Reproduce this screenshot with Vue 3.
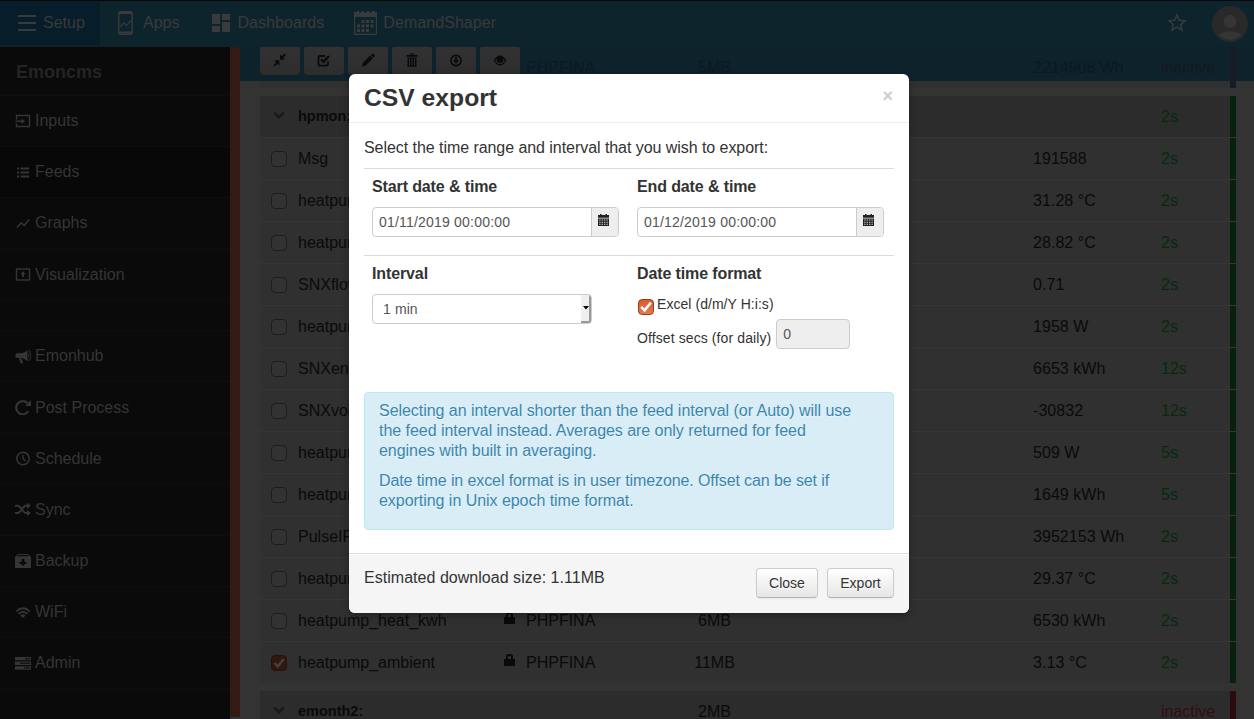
<script setup>
const icons = {
  inputs: '<path d="M1.500 5.500V1.500H14.500V12.500H1.500V9.300" fill="none" stroke="currentColor" stroke-width="1.400"/><path d="M.5 6.500h6V4.400L10 7.300 6.500 10.200V8.100H.5z"/>',
  feeds: '<path d="M2 2.500h2v2H2zM5.500 2.500H14v2H5.500zM2 6.500h2v2H2zM5.500 6.500H14v2H5.500zM2 10.500h2v2H2zM5.500 10.500H14v2H5.500z"/>',
  graphs: '<path d="M2 11.600 6.300 6.800 9.100 9.600 14.300 3.400" fill="none" stroke="currentColor" stroke-width="1.500"/>',
  visualization: '<rect x="1.500" y="2" width="13" height="11" fill="none" stroke="currentColor" stroke-width="1.400"/><path d="M8 4.300 10.700 7.300H9V10H7V7.300H5.300z"/>',
  emonhub: '<path d="M1.800 4.200H6C8.300 4.200 10.600 2.800 12 1.200V12c-1.400-1.500-3.700-3-6-3H1.800C-.2 8.200-.2 5 1.800 4.200z"/><path d="M4 9.500h2.500l1.600 5H5.700z"/><ellipse cx="13.600" cy="6.500" rx="1.800" ry="5.400" fill="none" stroke="currentColor" stroke-width="1"/><path d="M13 4.800q2 1.600 0 3.400z"/>',
  process: '<path d="M13.300 11.300A6.600 6.600 0 1 1 12.600 3.200" fill="none" stroke="currentColor" stroke-width="2.100"/><path d="M16 0V6H10z"/>',
  schedule: '<circle cx="8" cy="7.500" r="6.200" fill="none" stroke="currentColor" stroke-width="1.500"/><path d="M8 3.700V7.600L10.600 10" fill="none" stroke="currentColor" stroke-width="1.300"/>',
  sync: '<path d="M0 3.800H2.800C6 3.800 7.500 11 11 11H13M0 11H2.800C6 11 7.500 3.800 11 3.800H13" fill="none" stroke="currentColor" stroke-width="1.900"/><path d="M12 .8 16 3.800 12 6.800zM12 8 16 11 12 14z"/>',
  backup: '<path fill-rule="evenodd" d="M3 0H13L16 3V14H0V3zM3.400 1 2.200 2.300H13.800L12.600 1zM6.500 5V8H3.400L8 12 12.600 8H9.500V5z"/>',
  wifi: '<path d="M1.200 6.300Q8 .2 14.800 6.300M3.400 8.900Q8 4.700 12.600 8.900" fill="none" stroke="currentColor" stroke-width="1.700"/><path d="M5.300 10.300Q8 8 10.700 10.300L8 13z"/>',
  admin: '<path fill-rule="evenodd" d="M0 1H16V4.300H0zM10 2.200V3.200H15V2.200zM0 5.500H16V9H0zM5 6.800V7.800H15V6.800zM0 10.200H16V13.800H0zM9 11.500V12.500H15V11.500z"/>',
  collapse: '<path d="M7.300 7.300V12.500L5.400 10.800 2.800 13.400 1.600 12.200 4.200 9.600 2.500 7.300zM8 6.700V1.500L9.800 3.200 12.600.6 14 2 11.200 4.800 13 6.700z"/>',
  select: '<path d="M12 8.500V11.200Q12 12.700 10.500 12.700H4Q2.500 12.700 2.500 11.200V4.500Q2.500 3 4 3H9" fill="none" stroke="currentColor" stroke-width="1.800"/><path d="M5 6.300 7.500 8.800 13 3" fill="none" stroke="currentColor" stroke-width="2.300"/>',
  edit: '<path d="M2 13.500 3 9.800 10.200 2.600 12.900 5.300 5.700 12.500zM10.900 1.900 12 .8Q13 .5 14.300 1.800 15 2.700 14.500 3.700L13.500 4.700z"/>',
  trash: '<path fill-rule="evenodd" d="M2.500 2H6V.5H10V2H13.500V3.700H2.500zM7 1.400V2H9V1.400zM3.500 4.600H12.500V13.700H3.500zM5 5.600V12.600H5.900V5.600zM7.500 5.600V12.600H8.500V5.600zM10.100 5.600V12.600H11V5.600z"/>',
  download: '<circle cx="8" cy="7.500" r="5.100" fill="none" stroke="currentColor" stroke-width="1.600"/><path d="M7 4H9V7.200H11L8 10.700 5 7.200H7z"/>',
  eye: '<path d="M2.200 7.500Q8-1 13.800 7.500 8 16 2.200 7.500z" fill="none" stroke="currentColor" stroke-width="1.300"/><circle cx="8" cy="6.700" r="3.300"/>',
  lock: '<path fill-rule="evenodd" d="M0 5H2V2.500Q2 0 4.500 0H6.500Q9 0 9 2.500V5H11V12H0zM4 5H7V2.800Q7 2 6.200 2H4.800Q4 2 4 2.800z"/>',
  chevron: '<path d="M1.300 1.500 6 6.200 10.700 1.500" fill="none" stroke="currentColor" stroke-width="3"/>',
  calendar: '<path fill-rule="evenodd" d="M0 1H2V0H3.500V1H7.500V0H9V1H11V3.700H0zM0 4.500H11V12H0zM1.300 5.600V6.600H2.500V5.600zM3.700 5.600V6.600H4.900V5.600zM6.100 5.600V6.600H7.300V5.600zM8.500 5.600V6.600H9.700V5.600zM1.300 7.700V8.700H2.500V7.700zM3.700 7.700V8.700H4.900V7.700zM6.100 7.700V8.700H7.300V7.700zM8.500 7.700V8.700H9.700V7.700zM1.300 9.800V10.800H2.500V9.800zM3.700 9.800V10.800H4.900V9.800zM6.100 9.800V10.800H7.300V9.800zM8.500 9.800V10.800H9.700V9.800z"/>'
}
const setup = [
  { icon: 'inputs', label: 'Inputs' },
  { icon: 'feeds', label: 'Feeds', active: true },
  { icon: 'graphs', label: 'Graphs' },
  { icon: 'visualization', label: 'Visualization' }
]
const extras = [
  { icon: 'emonhub', label: 'Emonhub' },
  { icon: 'process', label: 'Post Process' },
  { icon: 'schedule', label: 'Schedule' },
  { icon: 'sync', label: 'Sync' },
  { icon: 'backup', label: 'Backup' },
  { icon: 'wifi', label: 'WiFi' },
  { icon: 'admin', label: 'Admin' }
]
const tools = ['collapse', 'select', 'edit', 'trash', 'download', 'eye']
const feeds = [
  { name: 'Msg', value: '191588', time: '2s' },
  { name: 'heatpum', value: '31.28 °C', time: '2s' },
  { name: 'heatpum', value: '28.82 °C', time: '2s' },
  { name: 'SNXflow', value: '0.71', time: '2s' },
  { name: 'heatpum', value: '1958 W', time: '2s' },
  { name: 'SNXene', value: '6653 kWh', time: '12s' },
  { name: 'SNXvol', value: '-30832', time: '12s' },
  { name: 'heatpum', value: '509 W', time: '5s' },
  { name: 'heatpum', value: '1649 kWh', time: '5s' },
  { name: 'PulseIR', value: '3952153 Wh', time: '2s' },
  { name: 'heatpum', value: '29.37 °C', time: '2s' },
  { name: 'heatpump_heat_kwh', engine: 'PHPFINA', size: '6MB', value: '6530 kWh', time: '2s' },
  { name: 'heatpump_ambient', engine: 'PHPFINA', size: '11MB', value: '3.13 °C', time: '2s', checked: true }
]
const dates = [
  { label: 'Start date & time', value: '01/11/2019 00:00:00' },
  { label: 'End date & time', value: '01/12/2019 00:00:00' }
]
</script>

<template>
  <div class="app">
    <header class="topbar">
      <div class="tab active">
        <svg width="18" height="16"><path d="M0 1h18M0 8h18M0 15h18" stroke="currentColor" stroke-width="2" /></svg>
        <span>Setup</span>
      </div>
      <div class="tab apps">
        <svg width="15" height="24"><rect x=".8" y=".8" width="13.400" height="22.400" rx="1.500" fill="none" stroke="currentColor" stroke-width="1.500" /><path d="M1 2h13M1 21.500h13" stroke="currentColor" stroke-width="2" /><path d="M2 15.500 6 12 8.500 14.500 13 9.500" fill="none" stroke="currentColor" stroke-width="1.200" /></svg>
        <span>Apps</span>
      </div>
      <div class="tab dash">
        <svg width="18" height="18" fill="currentColor"><path d="M0 0h8v10H0zM0 12h8v6H0zM10 0h8v6h-8zM10 8h8v10h-8z" /></svg>
        <span>Dashboards</span>
      </div>
      <div class="tab demand">
        <svg width="23" height="24" fill="currentColor"><path fill-rule="evenodd" d="M0 1H3V0H5V1.500H8V0H10V1.500H13V0H15V1.500H18V0H20V1H23V24H0zM1.200 6V22.800H21.800V6z" /><path d="M7.500 9h3v3h-3zM12 9h3v3h-3zM16.500 9h3v3h-3zM3 13.500h3v3H3zM7.500 13.500h3v3h-3zM12 13.500h3v3h-3zM16.500 13.500h3v3h-3zM3 18h3v3H3zM7.500 18h3v3h-3zM12 18h3v3h-3z" /></svg>
        <span>DemandShaper</span>
      </div>
      <svg class="star" width="20" height="20" viewBox="0 0 20 20"><path d="M10 2 12.300 7.300 18 7.800 13.700 11.600 15 17.200 10 14.200 5 17.200 6.300 11.600 2 7.800 7.700 7.300z" fill="none" stroke="currentColor" stroke-width="1.500" /></svg>
      <svg class="avatar" width="36" height="36"><circle cx="18" cy="18" r="18" class="a0" /><circle cx="18" cy="15.500" r="6.500" class="a1" /><path d="M6.500 29Q10 25.500 18 25.300 26 25.500 29.500 29 25 33.800 18 33.800 11 33.800 6.500 29z" class="a1" /></svg>
    </header>

    <div class="body">
      <nav class="sidebar">
        <h4>Emoncms</h4>
        <div v-for="item in setup" :key="item.label" class="item" :class="{ active: item.active }">
          <svg width="16" height="15" v-html="icons[item.icon]" /><span>{{ item.label }}</span>
        </div>
        <div class="spacer"></div>
        <div v-for="item in extras" :key="item.label" class="item">
          <svg width="16" height="15" v-html="icons[item.icon]" /><span>{{ item.label }}</span>
        </div>
      </nav>
      <div class="edge"></div>

      <main>
        <div class="tools">
          <button v-for="tool in tools" :key="tool"><svg width="16" height="15" v-html="icons[tool]" /></button>
          <div class="ghost"><span>PHPFINA</span><span class="g-size">5MB</span><span>2214908 Wh</span><span class="g-time">inactive</span><i></i></div>
        </div>
        <div class="strip"><i></i></div>

        <section class="feeds">
          <div class="row head">
            <svg width="12" height="9" v-html="icons.chevron" /><b>hpmon:</b>
            <span class="time">2s</span><i></i>
          </div>
          <div v-for="(feed, n) in feeds" :key="n" class="row">
            <span class="box" :class="{ on: feed.checked }"><svg v-if="feed.checked" width="16" height="16"><path d="M3.500 8 6.800 11.500 12.800 4" fill="none" stroke="currentColor" stroke-width="2.400" /></svg></span>
            <span>{{ feed.name }}</span>
            <template v-if="feed.engine">
              <svg class="lock" width="11" height="12" v-html="icons.lock" />
              <span>{{ feed.engine }}</span>
              <span class="size">{{ feed.size }}</span>
            </template>
            <span class="value">{{ feed.value }}</span>
            <span class="time">{{ feed.time }}</span><i></i>
          </div>
        </section>
        <section class="feeds">
          <div class="row head">
            <svg width="12" height="9" v-html="icons.chevron" /><b>emonth2:</b>
            <span class="size">2MB</span><span class="time off">inactive</span><i class="off"></i>
          </div>
        </section>
      </main>
    </div>

    <div class="modal">
      <div class="modal-head"><h3>CSV export</h3><span class="x">×</span></div>
      <div class="modal-body">
        <p class="intro">Select the time range and interval that you wish to export:</p>
        <div class="grid dates">
          <div v-for="date in dates" :key="date.label">
            <b>{{ date.label }}</b>
            <div class="group"><span class="field">{{ date.value }}</span><span class="addon"><svg width="11" height="12" v-html="icons.calendar" /></span></div>
          </div>
        </div>
        <div class="grid options">
          <div>
            <b>Interval</b>
            <div class="select"><span>1 min</span><em><svg width="6" height="4"><path d="M0 0h6L3 3.500z" /></svg></em></div>
          </div>
          <div>
            <b>Date time format</b>
            <div class="excel"><span class="box on lit"><svg width="16" height="16"><path d="M3.200 7.800 6.600 11.300 12.900 3.600" fill="none" stroke="currentColor" stroke-width="2.500" /></svg></span><span>Excel (d/m/Y H:i:s)</span></div>
            <div class="offset"><span>Offset secs (for daily)</span><span class="zero">0</span></div>
          </div>
        </div>
        <div class="alert">
          <p>Selecting an interval shorter than the feed interval (or Auto) will use<br>the feed interval instead. Averages are only returned for feed<br>engines with built in averaging.</p>
          <p><span class="tight">Date time in excel format is in user timezone. Offset can be set if</span><br>exporting in Unix epoch time format.</p>
        </div>
      </div>
      <div class="modal-foot"><span>Estimated download size: 1.11MB</span><button>Close</button><button>Export</button></div>
    </div>
  </div>
</template>

<style>
body { background: #333; }
</style>

<style scoped>
* { box-sizing: border-box; }
.app { position: relative; width: 1254px; height: 719px; overflow: hidden; background: #333; color: #0a0a0a; font: 16px/20px "Liberation Sans", Arial, sans-serif; }
svg { display: block; flex: none; fill: currentColor; }
p, h3, h4 { margin: 0; }
.topbar { display: flex; height: 47px; border-top: 1px solid #080808; background: #0e242d; color: #383a3b; }
.tab { display: flex; align-items: center; height: 44px; }
.tab.active { width: 100px; padding-left: 18px; background: #071e2a; gap: 7px; }
.apps { padding-left: 18px; gap: 10px; }
.dash { padding-left: 33px; gap: 7px; letter-spacing: .06px; }
.demand { padding-left: 30px; gap: 6px; letter-spacing: .06px; }
.star { margin: 12px 25px 0 auto; }
.avatar { margin: 5px 6px 0 0; }
.a0 { fill: #292929; }
.a1 { fill: #353535; }
.body { display: flex; height: 672px; }
.sidebar { width: 230px; background: #0a0a0a; color: #353535; }
.sidebar h4 { height: 49px; padding: 15px 16px 0; border-bottom: 1px solid #0e0e0e; font-size: 18px; line-height: 20px; color: #242424; }
.item { display: flex; align-items: center; height: 51.200px; padding-left: 15px; gap: 4px; border-bottom: 1px solid #0e0e0e; }
.item.active { background: #080808; }
.spacer { height: 30.500px; border-bottom: 1px solid #0e0e0e; }
.edge { width: 10px; height: 670px; background: #331a14; }
main { flex: 1; }
.tools { position: relative; display: flex; gap: 4px; height: 34px; padding-left: 20px; background: #0d222b; }
.tools button { display: flex; justify-content: center; width: 40px; height: 28px; padding: 6px 0 0; border: 0; border-radius: 2px 2px 4px 4px; background: linear-gradient(#323232, #2d2d2d); color: #0a0a0a; }
.ghost { position: absolute; inset: 0; display: grid; grid-template-columns: 129px 378px 128px 69px 6px; padding-left: 286px; line-height: 41px; color: #0b1a21; pointer-events: none; }
.g-size { padding-left: 43px; }
.g-time { color: #15191f; }
.ghost i { background: #161b25; }
.strip { display: flex; width: 976px; height: 7px; margin-left: 20px; background: #303030; padding-left: 970px; }
.strip i { width: 6px; background: #2c0b0e; }
.feeds { width: 976px; margin: 8px 0 0 20px; }
.row { display: grid; grid-template-columns: 38px 206px 22px 129px 119px 259px 128px 69px 5px; grid-template-columns: 38px 206px 22px 129px 119px 259px 128px 69px 6px; height: 42px; border-bottom: 1px solid #353535; background: #303030; line-height: 41px; white-space: nowrap; }
.row > * { grid-row: 1; }
.row > svg:first-child { margin: 15px 0 0 13px; color: #1b1b1b; }
.row:last-child { height: 41px; border-bottom: 0; }
.row.head { height: 42px; background: #2c2c2c; }
.row > i { grid-column: 9; background: #08210e; }
.row > i.off { background: #2c0b0e; }
.head b { font-size: 14.500px; }
.size { grid-column: 5; text-align: center; }
.value { grid-column: 7; letter-spacing: .05px; }
.time { grid-column: 8; color: #08290f; }
.time.off { color: #340d11; }
.lock { margin-top: 12px; }
.box { width: 16px; height: 16px; margin: 13px 0 0 11px; border: 1px solid #1d1d1d; border-radius: 4px; background: #323232; }
.box.on { border-color: #26100a; background: #33170d; color: #424242; }
.box svg { margin: -1px; }
.modal { position: absolute; left: 349px; top: 74px; width: 560px; height: 539px; display: flex; flex-direction: column; border-radius: 6px; background: #fff; color: #333; box-shadow: 0 3px 7px rgba(0, 0, 0, .3); }
.modal-head { display: flex; justify-content: space-between; height: 49px; padding: 3px 16px 0 15px; border-bottom: 1px solid #eee; }
h3 { font-size: 24.700px; line-height: 41px; }
.x { font-size: 18px; font-weight: bold; line-height: 39px; color: #ccc; }
.modal-body { flex: 1; padding: 15px 15px 0; }
.intro { letter-spacing: -.055px; }
.grid { display: grid; grid-template-columns: 265px 265px; padding: 8px; border-top: 1px solid #ddd; }
.dates { height: 87px; margin-top: 10px; }
.grid b { display: block; letter-spacing: -.12px; }
.group { display: flex; width: 247px; height: 30px; margin-top: 10px; border: 1px solid #ccc; border-radius: 4px; font-size: 14px; line-height: 28px; letter-spacing: .2px; color: #555; }
.field { width: 219px; padding-left: 6px; border-right: 1px solid #ccc; }
.addon { flex: 1; padding: 6px 0 0 6px; border-radius: 0 3px 3px 0; background: #eee; color: #222; }
.select { display: flex; justify-content: space-between; width: 220px; height: 30px; margin-top: 10px; padding-left: 10px; border: 1px solid #ccc; border-radius: 4px; font-size: 14px; line-height: 28px; letter-spacing: .1px; color: #555; overflow: hidden; }
.select em { display: flex; align-items: center; justify-content: flex-end; width: 10px; border-right: 2px solid #999; border-bottom: 2px solid #999; background: #efefef; color: #000; }
.options { height: 137px; }
.excel { display: flex; height: 25px; margin-top: 10px; gap: 3px; font-size: 14px; letter-spacing: .05px; }
.box.lit { margin: 5px 0 0 1px; border-color: #9d3c1b; background: linear-gradient(#dc5a2a, #e27b50); color: #fff; }
.offset { display: flex; gap: 5px; font-size: 14px; line-height: 38px; letter-spacing: .1px; }
.zero { width: 74px; height: 30px; padding-left: 6px; border: 1px solid #ccc; border-radius: 4px; background: #eee; line-height: 28px; color: #555; }
.alert { height: 138px; padding: 8px 14px; border: 1px solid #bce8f1; border-radius: 4px; background: #d9edf7; color: #3a87ad; text-shadow: 0 1px 0 rgba(255, 255, 255, .5); letter-spacing: -.04px; white-space: nowrap; }
.alert p + p { margin-top: 10px; }
.tight { letter-spacing: -.1px; }
.modal-foot { display: flex; height: 60px; padding: 14px 15px; border-top: 1px solid #ddd; border-radius: 0 0 6px 6px; background: #f5f5f5; box-shadow: inset 0 1px 0 #fff; }
.modal-foot span { margin-right: auto; letter-spacing: .03px; }
.modal-foot button { height: 30px; margin-left: 9px; padding: 0; width: 62px; border: 1px solid #ccc; border-bottom-color: #b3b3b3; border-radius: 4px; background: linear-gradient(#fff, #e6e6e6); color: #333; font: 14px/20px "Liberation Sans", Arial, sans-serif; text-shadow: 0 1px 1px rgba(255, 255, 255, .75); box-shadow: 0 1px 2px rgba(0, 0, 0, .05); }
.modal-foot button:last-child { width: 67px; }
</style>
